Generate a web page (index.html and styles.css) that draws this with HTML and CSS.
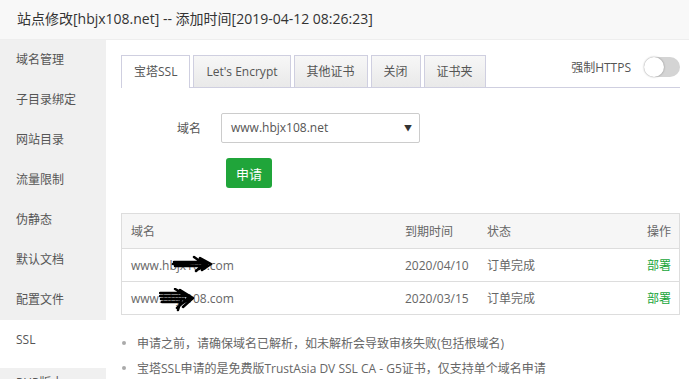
FILE: index.html
```html
<!DOCTYPE html>
<html lang="zh-CN">
<head>
    <meta charset="UTF-8">
    <title>站点修改</title>
    <link rel="stylesheet" href="styles.css">
</head>
<body>
    <div class="title">站点修改[hbjx108.net] -- 添加时间[2019-04-12 08:26:23]</div>
    <div class="layout">
        <ul class="side">
            <li>域名管理</li>
            <li>子目录绑定</li>
            <li>网站目录</li>
            <li>流量限制</li>
            <li>伪静态</li>
            <li>默认文档</li>
            <li>配置文件</li>
            <li class="active">SSL</li>
            <li class="last">PHP版本</li>
        </ul>
        <div class="main">
            <div class="tabbar">
                <div class="tabs">
                    <span class="tab active">宝塔SSL</span>
                    <span class="tab">Let's Encrypt</span>
                    <span class="tab">其他证书</span>
                    <span class="tab">关闭</span>
                    <span class="tab">证书夹</span>
                </div>
                <div class="force">强制HTTPS <span class="switch"></span></div>
            </div>

            <div class="form-row">
                <label>域名</label>
                <div class="select">www.hbjx108.net<span class="caret">&#9660;</span></div>
            </div>
            <div class="btn-row">
                <button class="btn">申请</button>
            </div>

            <table class="list">
                <thead>
                    <tr>
                        <th class="c-dom">域名</th>
                        <th class="c-date">到期时间</th>
                        <th>状态</th>
                        <th class="c-op">操作</th>
                    </tr>
                </thead>
                <tbody>
                    <tr>
                        <td><span class="dom">www.hbjx108.com
                            <svg class="scribble s1" width="42" height="18" viewBox="0 0 42 18">
                                <path d="M1 9 L31 8 M3 11 L30 11 M2 7 L26 7 M22 2 L32 9 L24 16 M28 3 L39 9 L30 15 M25 4 L35 9 L27 14"/>
                            </svg></span></td>
                        <td>2020/04/10</td>
                        <td>订单完成</td>
                        <td class="c-op"><a class="op">部署</a></td>
                    </tr>
                    <tr>
                        <td><span class="dom">www.hbjx108.com
                            <svg class="scribble s2" width="38" height="24" viewBox="0 0 38 24">
                                <path d="M1 5 L24 5 M1 8 L26 8 M2 11 L25 11 M3 14 L22 14 M16 1 L30 9 L18 20 M21 2 L34 10 L24 19 M19 4 L31 10 L21 17 M22 12 L19 22"/>
                            </svg></span></td>
                        <td>2020/03/15</td>
                        <td>订单完成</td>
                        <td class="c-op"><a class="op">部署</a></td>
                    </tr>
                </tbody>
            </table>

            <ul class="tips">
                <li>申请之前，请确保域名已解析，如未解析会导致审核失败(包括根域名)</li>
                <li>宝塔SSL申请的是免费版TrustAsia DV SSL CA - G5证书，仅支持单个域名申请</li>
            </ul>
        </div>
    </div>
</body>
</html>
```

FILE: styles.css
```css
/* Global */
body {
    margin: 0;
    height: 379px;
    overflow: hidden;
    background: #fff;
    font-family: 'Open Sans', 'Noto Sans CJK SC', sans-serif;
    font-size: 12px;
    color: #555;
}

/* Title bar */
.title {
    height: 39px;
    line-height: 38px;
    padding-left: 17px;
    background: #f8f8f8;
    border-bottom: 1px solid #eee;
    font-size: 14px;
    color: #333;
}

.layout {
    display: flex;
}

/* Side menu */
.side {
    width: 106px;
    margin: 0;
    padding: 0;
    list-style: none;
    background: #f0f0f0;
}

.side li {
    height: 40px;
    line-height: 40px;
    padding-left: 16px;
    color: #555;
}

.side li.active {
    height: 48px;
    background: #fff;
}

.side li.last {
    line-height: 30px;
}

/* Main area */
.main {
    flex: 1;
    padding: 15px 9px 0 15px;
}

.tabbar {
    display: flex;
    justify-content: space-between;
    border-bottom: 1px solid #cfcfe0;
}

.tabs {
    display: flex;
    gap: 3px;
}

.tab {
    height: 31px;
    line-height: 31px;
    padding: 0 12px;
    border: 1px solid #cfcfe0;
    border-bottom: none;
    background: linear-gradient(#f7f7f7, #e9e9e9);
    color: #555;
}

.tab.active {
    background: #fff;
    margin-bottom: -1px;
    height: 32px;
}

.force {
    display: flex;
    align-items: center;
    gap: 13px;
    height: 22px;
    margin-top: 1px;
    color: #555;
}

.switch {
    position: relative;
    width: 36px;
    height: 20px;
    border-radius: 10px;
    background: #d4d4d4;
}

.switch::after {
    content: "";
    position: absolute;
    left: 0;
    top: 0;
    width: 20px;
    height: 20px;
    border-radius: 50%;
    background: #fff;
    box-shadow: 0 0 2px rgba(0, 0, 0, 0.4);
}

/* Form */
.form-row {
    display: flex;
    align-items: center;
    margin-top: 25px;
}

.form-row label {
    width: 80px;
    margin-right: 20px;
    text-align: right;
    color: #555;
}

.select {
    position: relative;
    width: 188px;
    height: 28px;
    line-height: 28px;
    padding-left: 9px;
    border: 1px solid #ccc;
    border-radius: 2px;
    color: #555;
}

.caret {
    position: absolute;
    right: 7px;
    top: 0;
    font-size: 8px;
    color: #333;
}

.btn-row {
    margin-top: 15px;
    padding-left: 105px;
}

.btn {
    width: 46px;
    height: 30px;
    border: none;
    border-radius: 3px;
    background: #20a53a;
    color: #fff;
    font-family: inherit;
    font-size: 13px;
}

/* Table */
.list {
    width: 100%;
    margin-top: 25px;
    border-collapse: collapse;
    border: 1px solid #ddd;
}

.list th {
    height: 34px;
    padding: 0 9px;
    background: #f6f6f6;
    font-weight: normal;
    text-align: left;
    color: #666;
}

.list td {
    height: 32px;
    padding: 0 9px;
    border-top: 1px solid #ddd;
    color: #666;
}

.list .c-dom {
    width: 256px;
}

.list .c-date {
    width: 64px;
}

.list .c-op {
    text-align: right;
    padding-right: 8px;
}

.op {
    color: #20a53a;
}

.dom {
    position: relative;
}

.scribble {
    position: absolute;
    fill: none;
    stroke: #000;
    stroke-width: 2.5;
    stroke-linecap: round;
    stroke-linejoin: round;
}

.s1 {
    left: 41px;
    top: -2px;
}

.s2 {
    left: 28px;
    top: -2px;
}

/* Tips */
.tips {
    margin: 16px 0 0;
    padding: 0 0 0 1px;
    list-style: none;
}

.tips li {
    position: relative;
    line-height: 25px;
    padding-left: 15px;
    color: #666;
}

.tips li::before {
    content: "";
    position: absolute;
    left: 0;
    top: 10px;
    width: 4px;
    height: 4px;
    border-radius: 50%;
    background: #aaa;
}
```
